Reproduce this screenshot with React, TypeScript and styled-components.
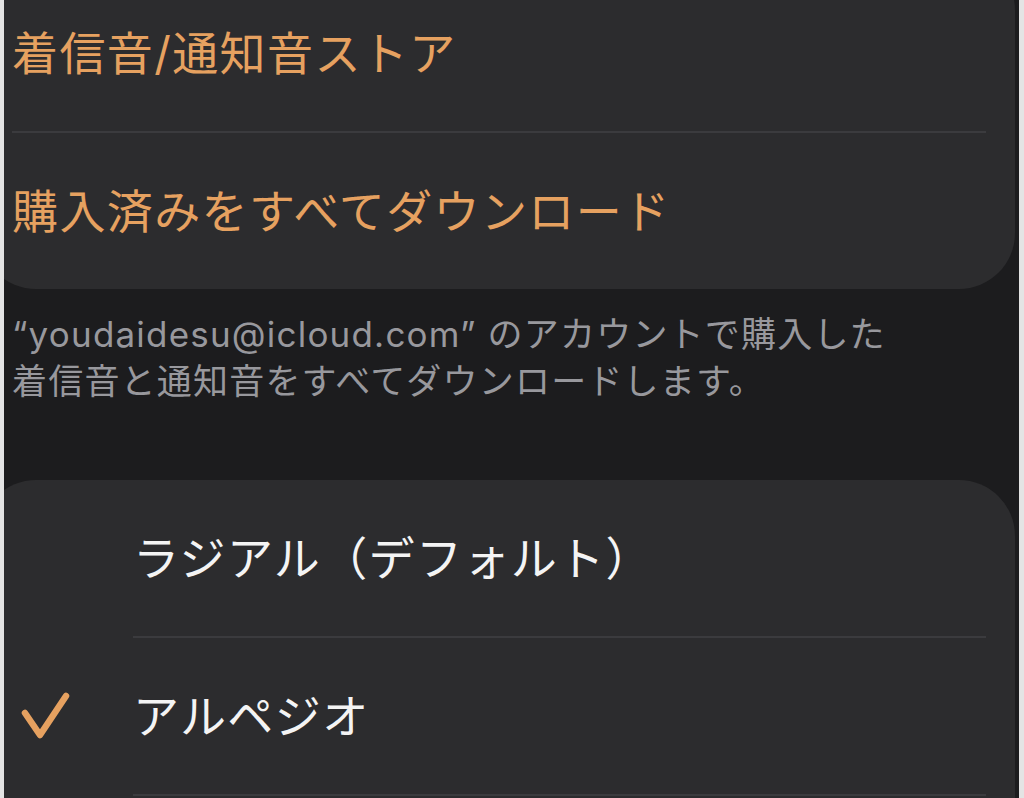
import styled, { createGlobalStyle } from "styled-components";

const ORANGE = "#e6a160";
const CARD = "#2c2c2e";
const LINE = "#3b3b3e";

const GlobalStyle = createGlobalStyle`
  html, body {
    margin: 0;
    padding: 0;
    background: #e4e4e4;
  }
  body {
    font-family: Inter, "Noto Sans CJK JP", "Noto Sans", sans-serif;
    -webkit-font-smoothing: antialiased;
  }
`;

const Frame = styled.div`
  padding: 0 5px 0 4px;
  background: #e4e4e4;
`;

const Screen = styled.div`
  height: 798px;
  overflow: hidden;
  background: #1c1c1e;
  display: flex;
  flex-direction: column;
`;

const Card = styled.div<{ $top?: number; $tail?: number }>`
  margin: ${(p) => p.$top ?? 0}px 4px 0 -24px;
  padding: ${(p) => (p.$top ? 21 : 0)}px 29px ${(p) => p.$tail ?? 0}px 32px;
  background: ${CARD};
  border-radius: 56px;
  flex-shrink: 0;
`;

const Row = styled.div<{ $indent?: number }>`
  height: 156px;
  display: grid;
  grid-template-columns: ${(p) => (p.$indent ? `${p.$indent}px 1fr` : "1fr")};
  align-items: center;
`;

const Label = styled.span<{ $accent?: boolean }>`
  font-size: 46px;
  line-height: 1;
  letter-spacing: 1.4px;
  color: ${(p) => (p.$accent ? ORANGE : "#f4f4f4")};
  white-space: nowrap;
`;

const Divider = styled.div<{ $inset?: number }>`
  height: 2px;
  margin-left: ${(p) => p.$inset ?? 0}px;
  background: ${LINE};
`;

const Footer = styled.p`
  margin: 0;
  padding: 22px 0 0 8px;
  font-size: 35px;
  line-height: 47px;
  letter-spacing: 1.2px;
  color: #98989d;
  white-space: nowrap;
`;

const Gap = styled.div`
  height: 75px;
  flex-shrink: 0;
`;

const CheckCell = styled.div`
  display: flex;
  align-items: center;
  padding-left: 8px;
`;

const Check = () => (
  <svg width="50" height="50" viewBox="0 0 50 50" fill="none">
    <path
      d="M5 22 L20 44 L46 5"
      stroke={ORANGE}
      strokeWidth="6.5"
      strokeLinecap="round"
      strokeLinejoin="round"
    />
  </svg>
);

const tones = [
  { name: "ラジアル（デフォルト）", selected: false },
  { name: "アルペジオ", selected: true },
];

export default function App() {
  return (
    <>
      <GlobalStyle />
      <Frame>
        <Screen>
          <Card $top={-46}>
            <Row>
              <Label $accent>着信音/通知音ストア</Label>
            </Row>
            <Divider />
            <Row>
              <Label $accent>購入済みをすべてダウンロード</Label>
            </Row>
          </Card>
          <Footer>
            “youdaidesu@icloud.com” のアカウントで購入した
            <br />
            着信音と通知音をすべてダウンロードします。
          </Footer>
          <Gap />
          <Card $tail={60}>
            {tones.map((t) => (
              <div key={t.name}>
                <Row $indent={121}>
                  <CheckCell>{t.selected && <Check />}</CheckCell>
                  <Label>{t.name}</Label>
                </Row>
                <Divider $inset={121} />
              </div>
            ))}
          </Card>
        </Screen>
      </Frame>
    </>
  );
}
